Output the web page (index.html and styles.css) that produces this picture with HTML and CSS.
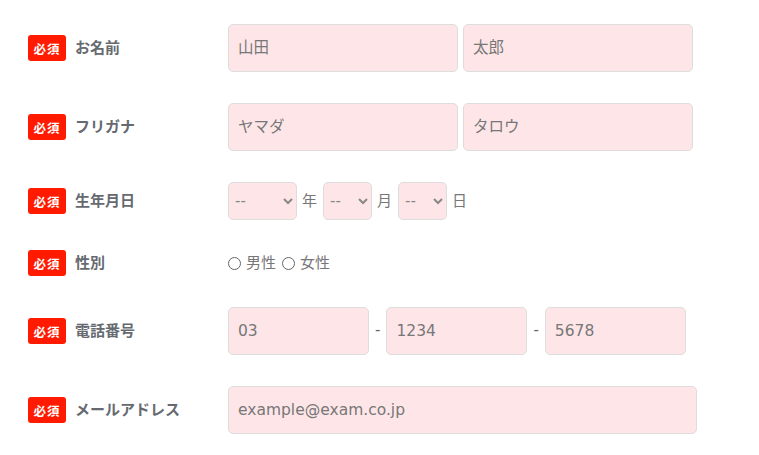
FILE: index.html
```html
<!DOCTYPE html>
<html lang="ja">

<head>
    <meta charset="UTF-8">
    <meta name="viewport" content="width=device-width, initial-scale=1.0">
    <title>お問い合わせフォーム</title>
    <link rel="stylesheet" href="styles.css">
</head>

<body>
    <form class="form">
        <div class="form-row">
            <div class="form-label"><span class="required">必須</span><span class="label-text">お名前</span></div>
            <div class="form-field">
                <input type="text" class="input-half" placeholder="山田">
                <input type="text" class="input-half" placeholder="太郎">
            </div>
        </div>

        <div class="form-row">
            <div class="form-label"><span class="required">必須</span><span class="label-text">フリガナ</span></div>
            <div class="form-field">
                <input type="text" class="input-half" placeholder="ヤマダ">
                <input type="text" class="input-half" placeholder="タロウ">
            </div>
        </div>

        <div class="form-row form-row-short">
            <div class="form-label"><span class="required">必須</span><span class="label-text">生年月日</span></div>
            <div class="form-field">
                <select class="select-year"><option>--</option></select>
                <span class="unit">年</span>
                <select class="select-small"><option>--</option></select>
                <span class="unit">月</span>
                <select class="select-small"><option>--</option></select>
                <span class="unit">日</span>
            </div>
        </div>

        <div class="form-row">
            <div class="form-label"><span class="required">必須</span><span class="label-text">性別</span></div>
            <div class="form-field">
                <label class="radio"><input type="radio" name="sex"><span>男性</span></label>
                <label class="radio"><input type="radio" name="sex"><span>女性</span></label>
            </div>
        </div>

        <div class="form-row">
            <div class="form-label"><span class="required">必須</span><span class="label-text">電話番号</span></div>
            <div class="form-field">
                <input type="tel" class="input-tel" placeholder="03">
                <span class="dash">-</span>
                <input type="tel" class="input-tel" placeholder="1234">
                <span class="dash">-</span>
                <input type="tel" class="input-tel" placeholder="5678">
            </div>
        </div>

        <div class="form-row">
            <div class="form-label"><span class="required">必須</span><span class="label-text">メールアドレス</span></div>
            <div class="form-field">
                <input type="email" class="input-full" placeholder="example@exam.co.jp">
            </div>
        </div>
    </form>
</body>

</html>
```

FILE: styles.css
```css
body {
    font-family: 'DejaVu Sans', 'Noto Sans CJK JP', sans-serif;
    background-color: #fff;
    color: #666;
    margin: 0;
}

.form {
    padding: 24px 0 0 28px;
}

.form-row {
    display: flex;
    align-items: center;
    margin-bottom: 31px;
}

.form-row-short {
    margin-bottom: 30px;
}

.form-label {
    flex: 0 0 200px;
    display: flex;
    align-items: center;
    font-family: 'Noto Sans CJK JP', sans-serif;
    font-size: 15px;
    font-weight: bold;
    color: #666a70;
}

.label-text {
    padding-bottom: 3px;
}

.required {
    display: inline-flex;
    justify-content: center;
    align-items: center;
    width: 38px;
    height: 26px;
    margin-right: 9px;
    background-color: #ff1a00;
    color: #fff;
    border-radius: 3px;
    font-size: 12.5px;
    letter-spacing: 1px;
}

.form-field {
    display: flex;
    align-items: center;
}

.form-field input[type="text"],
.form-field input[type="tel"],
.form-field input[type="email"],
.form-field select {
    box-sizing: border-box;
    height: 48px;
    padding: 0 9px;
    border: 1px solid #ddd;
    border-radius: 5px;
    background-color: #fee6e8;
    font-family: 'DejaVu Sans', 'Noto Sans CJK JP', sans-serif;
    font-size: 15.5px;
    color: #777;
    outline: none;
}

.form-field input::placeholder {
    color: #777;
}

.input-half {
    width: 230px;
    margin-right: 5px;
}

.input-tel {
    width: 141px;
}

.input-full {
    width: 469px;
}

.dash {
    margin: 0 6px;
    font-size: 15px;
    padding-bottom: 2px;
}

.form-field select {
    height: 38px;
    padding: 0 2px;
    font-size: 15px;
    color: #888;
}

.select-year {
    width: 69px;
}

.select-small {
    width: 49px;
}

.unit {
    margin: 0 6px 0 5px;
    padding-bottom: 3px;
    font-family: 'Noto Sans CJK JP', sans-serif;
    font-size: 15px;
    color: #777;
}

.radio {
    display: flex;
    align-items: center;
    margin-right: 6px;
    font-family: 'Noto Sans CJK JP', sans-serif;
    font-size: 15px;
    color: #777;
}

.radio span {
    padding-bottom: 3px;
}

.radio input {
    appearance: none;
    width: 13px;
    height: 13px;
    margin: 0 5px 0 0;
    border: 1px solid #666;
    border-radius: 50%;
    box-sizing: border-box;
}
```
